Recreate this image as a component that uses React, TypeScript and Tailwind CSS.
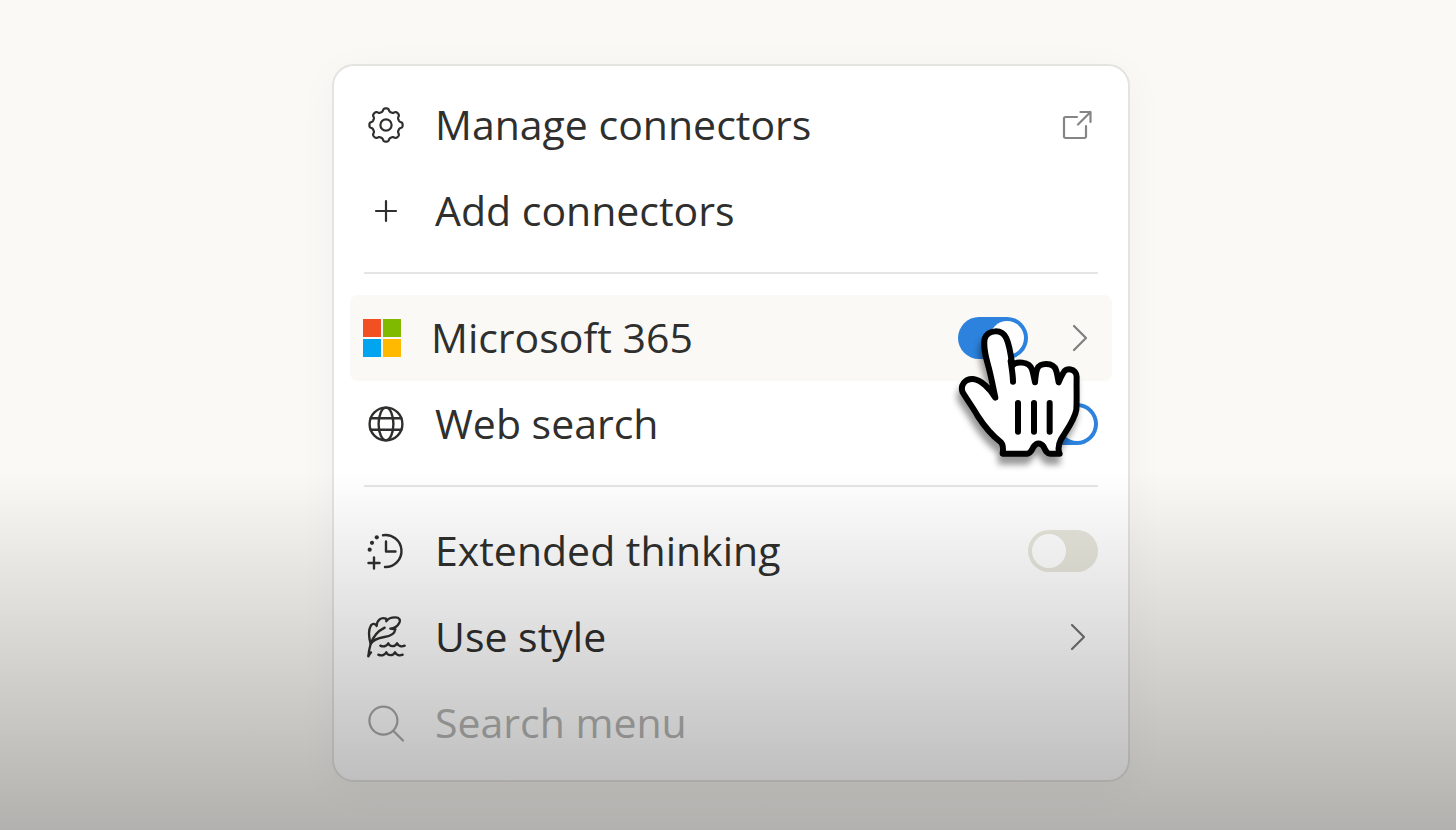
import { useState, type ReactNode } from 'react';
import { clsx } from 'clsx';

// Outline of the cog: a circle with eight rounded teeth
const gearPoints = Array.from({ length: 240 }, (_, i) => {
  const angle = (i / 240) * Math.PI * 2;
  const radius = 15.1 + 1.6 * Math.tanh(1.8 * Math.cos(8 * angle));
  return `${(20 + radius * Math.cos(angle)).toFixed(2)},${(20 + radius * Math.sin(angle)).toFixed(2)}`;
}).join(' ');

const iconProps = {
  fill: 'none',
  stroke: 'currentColor',
  strokeLinecap: 'round',
  strokeLinejoin: 'round',
  'aria-hidden': true,
} as const;

function GearIcon() {
  return (
    <svg {...iconProps} viewBox="0 0 40 40" strokeWidth="2.2" className="size-10">
      <polygon points={gearPoints} />
      <circle cx="20" cy="20" r="5.6" />
    </svg>
  );
}

function PlusIcon() {
  return (
    <svg {...iconProps} viewBox="0 0 40 40" strokeWidth="2.2" className="size-10">
      <path d="M20 10v20M10 20h20" />
    </svg>
  );
}

function MicrosoftIcon() {
  return (
    <svg viewBox="0 0 38 38" aria-hidden className="size-[38px]">
      <path fill="#f25022" d="M0 0h18v18H0z" />
      <path fill="#7fba00" d="M20 0h18v18H20z" />
      <path fill="#00a4ef" d="M0 20h18v18H0z" />
      <path fill="#ffb900" d="M20 20h18v18H20z" />
    </svg>
  );
}

function GlobeIcon() {
  return (
    <svg {...iconProps} viewBox="0 0 40 40" strokeWidth="2.4" className="size-10">
      <circle cx="20" cy="20" r="16.4" />
      <ellipse cx="20" cy="20" rx="7.4" ry="16.4" />
      <path d="M4.7 14.3h30.600M4.700 25.700h30.600" />
    </svg>
  );
}

function ThinkingIcon() {
  return (
    <svg {...iconProps} viewBox="0 0 40 40" strokeWidth="2.4" className="size-10">
      <path d="M17 4.200A16 16 0 1 1 19 36" />
      <path d="M20 10.500v10h9.500" />
      <path d="M8 26.500v11M2.500 32h11" />
      <g fill="currentColor" stroke="none">
        <circle cx="10.8" cy="6.3" r="2.1" />
        <circle cx="6" cy="11.8" r="2.1" />
        <circle cx="3.7" cy="18.7" r="2.1" />
      </g>
    </svg>
  );
}

function QuillIcon() {
  return (
    <svg {...iconProps} viewBox="78 284 120 126" strokeWidth="7" className="h-[42px] w-10">
      <path d="M85 405C86 393 88 381 92 368C87 350 83 328 93 312C98 306 106 306 110 314C111 297 123 286 138 292C139 294 139 297 139 300C144 290 155 288 166 288C178 288 183 296 177 306C172 315 162 321 151 322L166 324C164 338 153 344 133 347C114 350 98 357 92 368" />
      <path d="M92 368C99 346 114 329 134 319" />
      <path d="M86 403L93 393" />
      <path d="M121 373C129 377 140 376 145 366C149 376 164 378 171 366C175 375 185 377 194 373" />
      <path d="M115 400C123 404 134 403 139 393C143 403 158 405 165 393C169 402 179 404 188 400" />
    </svg>
  );
}

function SearchIcon() {
  return (
    <svg {...iconProps} viewBox="0 0 40 40" strokeWidth="2.2" className="size-10">
      <circle cx="17.4" cy="17.6" r="14" />
      <path d="M27.500 28L37 37.500" />
    </svg>
  );
}

function ExternalLinkIcon() {
  return (
    <svg {...iconProps} viewBox="0 0 30 30" strokeWidth="2.2" className="size-[30px]">
      <path d="M15 7H3.500A1.500 1.500 0 0 0 2 8.500V26.500A1.500 1.500 0 0 0 3.500 28H22.500A1.500 1.500 0 0 0 24 26.500V16" />
      <path d="M16 14.500L28.500 2M18.500 2h10v10" />
    </svg>
  );
}

function ChevronIcon() {
  return (
    <svg {...iconProps} viewBox="0 0 16 28" strokeWidth="2.2" className="h-7 w-4">
      <path d="M2 2l12 12L2 26" />
    </svg>
  );
}

function HandCursor() {
  return (
    <svg
      viewBox="84 104 384 420"
      aria-hidden
      className="pointer-events-none absolute left-0 top-2 z-10 h-[140px] w-32 max-w-none overflow-visible drop-shadow-[-2px_8px_3px_rgb(0_0_0/0.4)]"
    >
      <g stroke="#000" strokeWidth="18" strokeLinecap="round" strokeLinejoin="round">
        <path
          fill="#fff"
          d="M196 322C180 295 153 268 129 266C104 265 90 286 98 306C112 330 128 350 143 377C163 408 188 437 213 456C220 463 220 475 218 490H292C303 489 305 479 311 469C319 456 332 456 341 469C346 480 350 490 360 490H389C383 477 386 461 393 447C412 416 434 388 439 358C441 324 439 291 440 260C440 232 405 231 399 249C393 258 390 267 386 276C383 262 382 250 378 239C370 216 328 215 321 237C317 250 316 263 315 276C312 262 310 249 306 237C298 213 257 211 247 226C243 198 239 165 229 144C216 115 174 117 164 145C158 176 170 207 178 239C185 267 190 294 196 322Z"
        />
        <path fill="none" d="M242 212C245 233 249 256 249 274M264 338V424M312 338V424M359 338V424" />
      </g>
    </svg>
  );
}

interface SwitchProps {
  id: string;
  checked: boolean;
  onChange: (checked: boolean) => void;
}

function Switch({ id, checked, onChange }: SwitchProps) {
  return (
    <input
      id={id}
      type="checkbox"
      role="switch"
      checked={checked}
      onChange={(e) => onChange(e.target.checked)}
      className="block h-[42px] w-[70px] cursor-pointer appearance-none rounded-full bg-[#e6e6dc] p-1 before:block before:size-[34px] before:rounded-full before:bg-white checked:bg-[#2c82dd] checked:before:translate-x-7"
    />
  );
}

interface RowProps {
  icon: ReactNode;
  children: ReactNode;
  active?: boolean;
}

function Row({ icon, children, active }: RowProps) {
  return (
    <div
      className={clsx(
        'flex h-[86px] items-center gap-[29px] pr-3.5',
        active ? 'rounded-lg bg-[#faf9f6] pl-3' : 'pl-4'
      )}
    >
      <span className="flex w-10 shrink-0 justify-center">{icon}</span>
      {children}
    </div>
  );
}

function Divider() {
  return <hr className="mx-3.5 mb-[21px] mt-[18px] h-0.5 border-0 bg-[#e5e5e4]" />;
}

export default function App() {
  const [microsoft, setMicrosoft] = useState(true);
  const [webSearch, setWebSearch] = useState(true);
  const [thinking, setThinking] = useState(false);
  const [query, setQuery] = useState('');

  return (
    <main className="relative flex min-h-screen items-start justify-center bg-[#faf9f5] pb-12 pl-1.5 pt-16 font-['Open_Sans',sans-serif] text-[41px] text-[#2f2f2e]">
      <div className="w-full max-w-[798px] rounded-[22px] border-2 border-[#e4e3df] bg-white px-4 pb-3.5 pt-4 shadow-[0_8px_40px_rgb(0_0_0/0.04)]">
        <Row icon={<GearIcon />}>
          <a href="#connectors" className="flex flex-1 items-center justify-between">
            Manage connectors
            <span className="mr-1.5 text-[#858583]">
              <ExternalLinkIcon />
            </span>
          </a>
        </Row>
        <Row icon={<PlusIcon />}>
          <button type="button" className="flex-1 text-left">
            Add connectors
          </button>
        </Row>

        <Divider />

        <Row icon={<MicrosoftIcon />} active>
          <label htmlFor="microsoft" className="flex-1">
            Microsoft 365
          </label>
          <div className="flex items-center gap-11">
            <div className="relative">
              <Switch id="microsoft" checked={microsoft} onChange={setMicrosoft} />
              <HandCursor />
            </div>
            <button type="button" aria-label="Microsoft 365" className="mr-2.5 text-[#7f7f7d]">
              <ChevronIcon />
            </button>
          </div>
        </Row>
        <Row icon={<GlobeIcon />}>
          <label htmlFor="web-search" className="flex-1">
            Web search
          </label>
          <Switch id="web-search" checked={webSearch} onChange={setWebSearch} />
        </Row>

        <Divider />

        <Row icon={<ThinkingIcon />}>
          <label htmlFor="thinking" className="flex-1">
            Extended thinking
          </label>
          <Switch id="thinking" checked={thinking} onChange={setThinking} />
        </Row>
        <Row icon={<QuillIcon />}>
          <button type="button" className="flex flex-1 items-center justify-between">
            Use style
            <span className="mr-3 text-[#737372]">
              <ChevronIcon />
            </span>
          </button>
        </Row>
        <Row
          icon={
            <span className="text-[#a9a9a8]">
              <SearchIcon />
            </span>
          }
        >
          <input
            type="search"
            aria-label="Search menu"
            placeholder="Search menu"
            value={query}
            onChange={(e) => setQuery(e.target.value)}
            className="w-full min-w-0 flex-1 bg-transparent outline-none placeholder:text-[#b4b4b3]"
          />
        </Row>
      </div>

      {/* Shade that darkens the lower part of the page */}
      <div className="pointer-events-none absolute inset-x-0 bottom-0 z-20 h-[360px] bg-linear-to-b from-black/0 to-black/29" />
    </main>
  );
}
